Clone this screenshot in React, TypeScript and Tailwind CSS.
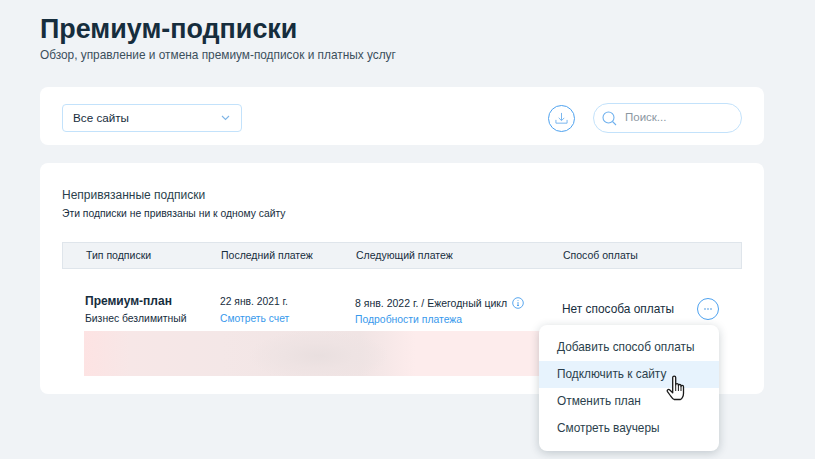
import React from "react";

function Hand() {
  return (
    <svg width="21" height="26" viewBox="0 0 20 26" className="absolute left-[127px] top-[50px]">
      <path d="M6.200 2.600c0-2 3-2 3 0v7.200c0-1.600 2.700-1.600 2.700 0v.8c0-1.500 2.600-1.500 2.600 0v.9c0-1.400 2.500-1.400 2.500.2v6.500c0 3-1.600 5.800-3 6.300H7.600c-1.500-.5-2.700-2.400-3.800-4L1 16.600c-.9-1.500.9-2.900 2.300-1.600l2.900 2.700z" fill="#fff" stroke="#1a1a1a" strokeWidth="1.300" strokeLinejoin="round"/>
      <path d="M9.200 10v6M11.900 10.600V16M14.500 11.500V16" stroke="#1a1a1a" strokeWidth="1" fill="none"/>
    </svg>
  );
}

export default function App() {
  return (
    <div className="w-[815px] h-[459px] overflow-hidden bg-[#f0f3f6] px-10 pt-[13px] font-['Liberation_Sans',sans-serif] text-[#162d3d]">
      <h1 className="text-[26.900px] leading-[32px] font-bold text-[#162d3d]">Премиум-подписки</h1>
      <p className="mt-[1px] text-[11.850px] leading-[18px] text-[#3b4f5c]">Обзор, управление и отмена премиум-подписок и платных услуг</p>

      <div className="mt-[23px] h-[58px] w-[724px] rounded-lg bg-white pl-[22px] pr-[22px] pt-[4px] flex items-center">
        <div className="w-[180px] h-[28px] rounded-[4px] border border-[#c3e2fb] pl-[10px] pr-[11px] flex items-center justify-between">
          <span className="text-[11.700px]">Все сайты</span>
          <svg width="9" height="6" viewBox="0 0 9 6" fill="none" stroke="#7fb5e6" strokeWidth="1.100"><path d="M1 1l3.500 3.500L8 1" /></svg>
        </div>
        <div className="ml-auto size-[27px] rounded-full border border-[#4ea2ef] flex items-center justify-center">
          <svg width="13" height="13" viewBox="0 0 14 14" fill="none" stroke="#6fb1ee" strokeWidth="1"><path d="M7 1v8M4 6.300 7 9.300l3-3M1 8.500v3.500h12V8.500" /></svg>
        </div>
        <div className="ml-[18px] w-[149px] h-[30px] rounded-full border border-[#c3e2fb] pl-[8px] flex items-center">
          <svg width="15" height="15" viewBox="0 0 15 15" fill="none" stroke="#6fb1ee" strokeWidth="1.100"><circle cx="6.500" cy="6.500" r="5.500"/><path d="M10.500 10.500 14 14"/></svg>
          <span className="ml-[8px] text-[11.500px] text-[#8b97a1]">Поиск...</span>
        </div>
      </div>

      <div className="relative mt-[18px] h-[231px] w-[724px] rounded-lg bg-white px-[22px] pt-[24px]">
        <div className="text-[12px] leading-[16px] text-[#2b3f4c]">Непривязанные подписки</div>
        <div className="mt-[3px] text-[10.350px] leading-[16px] text-[#162d3d]">Эти подписки не привязаны ни к одному сайту</div>

        <div className="mt-[20px] h-[27px] w-[680px] border border-[#dfe5eb] bg-[#f0f3f6] flex items-center text-[10.500px]">
          <div className="pl-[23px] w-[158px]">Тип подписки</div>
          <div className="w-[135px]">Последний платеж</div>
          <div className="w-[207px]">Следующий платеж</div>
          <div>Способ оплаты</div>
        </div>

        <div className="mt-[24px] h-[38px] flex">
          <div className="pl-[23px] w-[158px]">
            <div className="text-[12px] leading-[16px] font-bold">Премиум-план</div>
            <div className="mt-[2px] text-[10.400px] leading-[16px]">Бизнес безлимитный</div>
          </div>
          <div className="w-[135px] text-[10.300px] leading-[16px] pt-[1px]">
            <div>22 янв. 2021 г.</div>
            <div className="mt-[1px] text-[#3899ec]">Смотреть счет</div>
          </div>
          <div className="w-[207px] text-[10.500px] leading-[16px] pt-[2px]">
            <div className="flex items-center gap-[5px]">
              8 янв. 2022 г. / Ежегодный цикл
              <svg width="12" height="12" viewBox="0 0 12 12" fill="none" stroke="#5aa7ee"><circle cx="6" cy="6" r="5.300"/><path d="M6 3v.8M6 5v3.500M5 8.500h2" /></svg>
            </div>
            <div className="mt-[1px] text-[10.400px] text-[#3899ec]">Подробности платежа</div>
          </div>
          <div className="text-[11.900px] leading-[16px] pt-[8px] w-[135px]">Нет способа оплаты</div>
          <div className="size-[22px] rounded-full border border-[#4ea2ef] flex items-center justify-center mt-[5px]">
            <svg width="8" height="2" viewBox="0 0 8 2" fill="#3f8fdc"><circle cx="1" cy="1" r=".8"/><circle cx="4" cy="1" r=".8"/><circle cx="7" cy="1" r=".8"/></svg>
          </div>
        </div>

        <div className="ml-[22px] h-[45px] w-[460px] bg-[radial-gradient(ellipse_70px_26px_at_51%_55%,#e9dfdf_0%,#eee3e3_50%,rgba(240,228,228,0)_100%),linear-gradient(90deg,#fde3e3_0%,#f7e7e7_10%,#f4e7e7_30%,#f1e5e5_50%,#f0e4e4_60%,#fdecec_72%,#fdecec_100%)]" />

        <div className="absolute left-[499px] top-[162px] w-[180px] h-[126px] rounded-lg bg-white shadow-[0_2px_10px_rgba(22,45,61,0.22)] pt-[9px] text-[11.850px] text-[#2b3f4c]">
          <div className="h-[27px] pl-[18px] pt-[1px] flex items-center">Добавить способ оплаты</div>
          <div className="h-[27px] pl-[18px] pt-[1px] flex items-center bg-[#e7f3fd]">Подключить к сайту</div>
          <div className="h-[27px] pl-[18px] pt-[1px] flex items-center">Отменить план</div>
          <div className="h-[27px] pl-[18px] pt-[1px] flex items-center">Смотреть ваучеры</div>
          <Hand />
        </div>
      </div>
    </div>
  );
}
